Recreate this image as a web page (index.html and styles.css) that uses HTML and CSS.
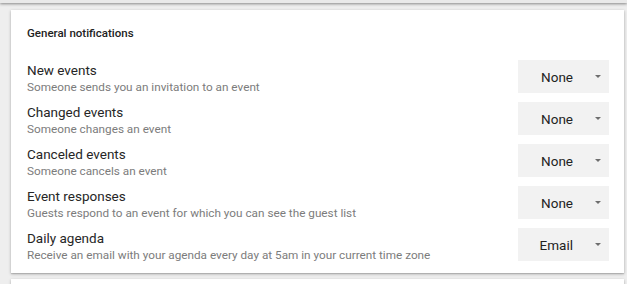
FILE: index.html
```html
<!DOCTYPE html>
<html lang="en">
<head>
<meta charset="utf-8">
<title>General notifications</title>
<link rel="stylesheet" href="styles.css">
</head>
<body>
<div class="page">
  <div class="card card-prev"></div>
  <section class="card card-main">
    <h2 class="section-title">General notifications</h2>
    <div class="rows">
      <div class="row">
        <div class="labels">
          <div class="title">New events</div>
          <div class="desc">Someone sends you an invitation to an event</div>
        </div>
        <div class="select"><span class="value">None</span><span class="arrow"></span></div>
      </div>
      <div class="row">
        <div class="labels">
          <div class="title">Changed events</div>
          <div class="desc">Someone changes an event</div>
        </div>
        <div class="select"><span class="value">None</span><span class="arrow"></span></div>
      </div>
      <div class="row">
        <div class="labels">
          <div class="title">Canceled events</div>
          <div class="desc">Someone cancels an event</div>
        </div>
        <div class="select"><span class="value">None</span><span class="arrow"></span></div>
      </div>
      <div class="row">
        <div class="labels">
          <div class="title">Event responses</div>
          <div class="desc">Guests respond to an event for which you can see the guest list</div>
        </div>
        <div class="select"><span class="value">None</span><span class="arrow"></span></div>
      </div>
      <div class="row">
        <div class="labels">
          <div class="title">Daily agenda</div>
          <div class="desc">Receive an email with your agenda every day at 5am in your current time zone</div>
        </div>
        <div class="select"><span class="value">Email</span><span class="arrow"></span></div>
      </div>
    </div>
  </section>
  <div class="card card-next"></div>
</div>
</body>
</html>
```
FILE: styles.css
```css
* { box-sizing: border-box; }
html, body { margin: 0; padding: 0; }
body {
  background: #eeeeee;
  font-family: Roboto, "Liberation Sans", Arial, sans-serif;
  color: #222;
  width: 627px;
  height: 284px;
  overflow: hidden;
}
.page {
  display: flex;
  flex-direction: column;
  gap: 6px;
}
.card {
  background: #fff;
  margin-left: 11px;
  width: 613px;
  box-shadow: 0 1px 3px rgba(0,0,0,0.25), 0 1px 1px rgba(0,0,0,0.12);
}
.card-prev {
  height: 3px;
  margin-left: 0;
  width: 627px;
  background: #e9e9e9;
  box-shadow: 0 1px 3px rgba(0,0,0,0.45);
}
.card-main {
  margin-top: 1px;
  padding: 17px 15px 12px 16px;
}
.card-next {
  height: 6px;
}
.section-title {
  margin: 0;
  font-size: 11.5px;
  font-weight: 500;
  line-height: 13px;
  color: #222;
}
.rows {
  margin-top: 20px;
  display: flex;
  flex-direction: column;
  gap: 9px;
}
.row {
  display: flex;
  align-items: center;
  justify-content: space-between;
  height: 33px;
}
.labels {
  display: flex;
  flex-direction: column;
  padding-top: 3px;
}
.title {
  font-size: 13.5px;
  line-height: 17px;
  color: #262626;
}
.desc {
  font-size: 11.75px;
  line-height: 15px;
  margin-top: 1px;
  color: #7c7c7c;
}
.select {
  width: 91px;
  height: 33px;
  background: #f2f2f2;
  display: flex;
  align-items: center;
  justify-content: flex-end;
  padding-right: 8px;
  gap: 22px;
}
.value {
  font-size: 13.5px;
  color: #222;
}
.arrow {
  width: 0;
  height: 0;
  border-left: 3px solid transparent;
  border-right: 3px solid transparent;
  border-top: 3px solid #6e6e6e;
}
```
